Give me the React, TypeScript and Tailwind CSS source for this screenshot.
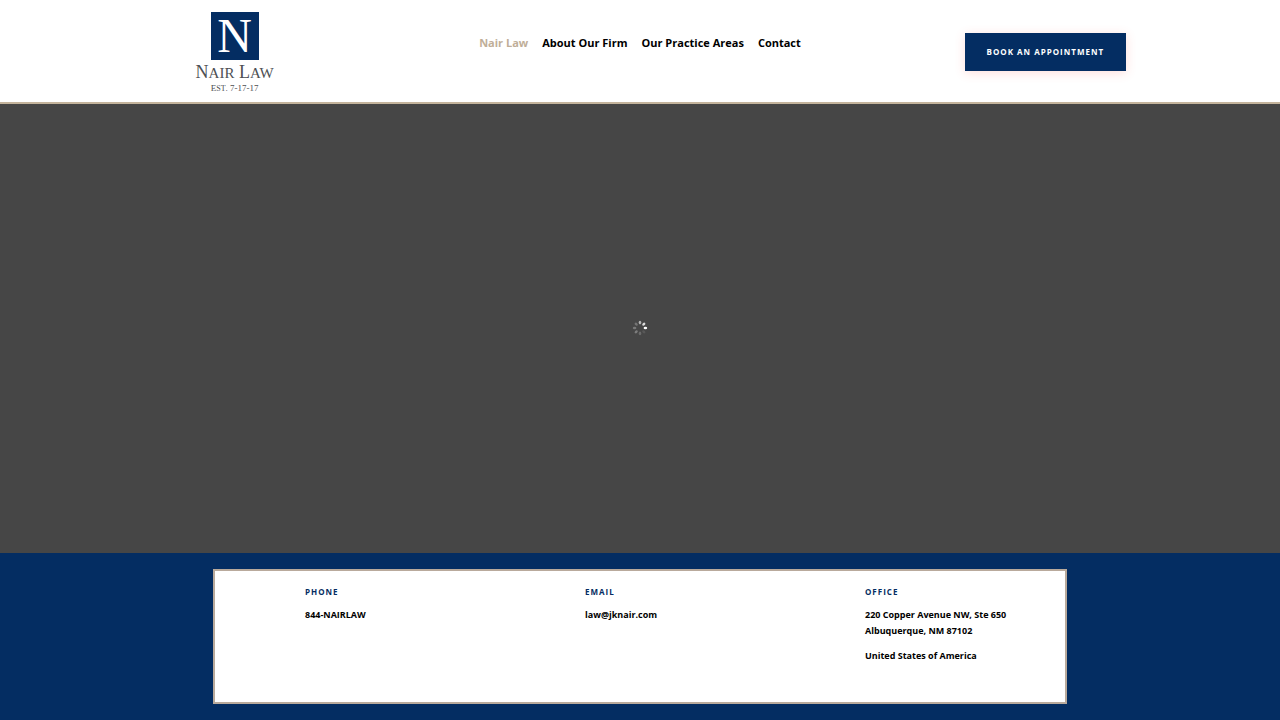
const NAV_LINKS = [
  { label: 'Nair Law', active: true },
  { label: 'About Our Firm', active: false },
  { label: 'Our Practice Areas', active: false },
  { label: 'Contact', active: false },
]

// opacity of each spinner dot, clockwise from the top
const SPINNER_DOTS = [0.6, 0.8, 1, 0.1, 0.2, 0.3, 0.28, 0.25]

function Logo() {
  return (
    <a
      href="#home"
      className="flex flex-col items-center font-['Liberation_Serif',serif] text-[#4d4f53]"
    >
      <span className="flex h-12 w-12 items-center justify-center bg-[#042d62] text-[48px] leading-[48px] text-white">
        N
      </span>
      <span className="mt-1 text-[18px] leading-4 whitespace-nowrap">
        N<span className="text-[15px]">AIR</span> L
        <span className="text-[15px]">AW</span>
      </span>
      <span className="mt-px text-[9px] leading-3 whitespace-nowrap">
        E<span className="text-[8px]">ST</span>. 7-17-17
      </span>
    </a>
  )
}

function Header() {
  return (
    <header className="grid grid-cols-3 items-start border-b-2 border-[#c4b49c] bg-white px-8">
      <div className="flex justify-center pt-3 pb-[7px]">
        <Logo />
      </div>
      <nav className="flex justify-center gap-[14px] pt-[35px] text-[11px] leading-4 font-bold whitespace-nowrap">
        {NAV_LINKS.map((link) => (
          <a
            key={link.label}
            href="#nav"
            className={link.active ? 'text-[#bfae98]' : 'text-black'}
          >
            {link.label}
          </a>
        ))}
      </nav>
      <div className="flex justify-center pt-[33px]">
        <button
          type="button"
          className="h-[38px] bg-[#042d62] px-[22px] text-[8px] font-bold tracking-[1px] whitespace-nowrap text-white uppercase shadow-[0_2px_10px_rgba(255,90,80,0.2)]"
        >
          Book an appointment
        </button>
      </div>
    </header>
  )
}

function Spinner() {
  return (
    <svg viewBox="0 0 16 16" className="h-4 w-4" role="status" aria-label="Loading">
      {SPINNER_DOTS.map((opacity, index) => (
        <ellipse
          key={index}
          cx="8"
          cy="2.6"
          rx="1.3"
          ry="1.8"
          fill="white"
          opacity={opacity}
          transform={`rotate(${index * 45} 8 8)`}
        />
      ))}
    </svg>
  )
}

function ContactTitle({ children }: { children: string }) {
  return (
    <h2 className="mb-[9px] text-[8px] leading-3 font-bold tracking-[1px] text-[#042d62] uppercase">
      {children}
    </h2>
  )
}

function Footer() {
  return (
    <footer className="bg-[#042d62] p-4">
      <div className="mx-auto flex min-h-[135px] w-full max-w-[854px] border-2 border-[#b9aa9c] bg-white pt-[15px] pb-8 pl-[90px] text-[9px] leading-4 font-bold text-black">
        <div className="w-[280px] shrink-0">
          <ContactTitle>Phone</ContactTitle>
          <p>844-NAIRLAW</p>
        </div>
        <div className="w-[280px] shrink-0">
          <ContactTitle>Email</ContactTitle>
          <p>law@jknair.com</p>
        </div>
        <address className="whitespace-nowrap not-italic">
          <ContactTitle>Office</ContactTitle>
          <p>
            220 Copper Avenue NW, Ste 650
            <br />
            Albuquerque, NM 87102
          </p>
          <p className="mt-[9px]">United States of America</p>
        </address>
      </div>
    </footer>
  )
}

function App() {
  return (
    <div className="flex min-h-screen flex-col bg-white font-['Open_Sans',sans-serif]">
      <Header />
      <main className="flex flex-1 items-center justify-center bg-[#464646] pb-0.5">
        <Spinner />
      </main>
      <Footer />
    </div>
  )
}

export default App
